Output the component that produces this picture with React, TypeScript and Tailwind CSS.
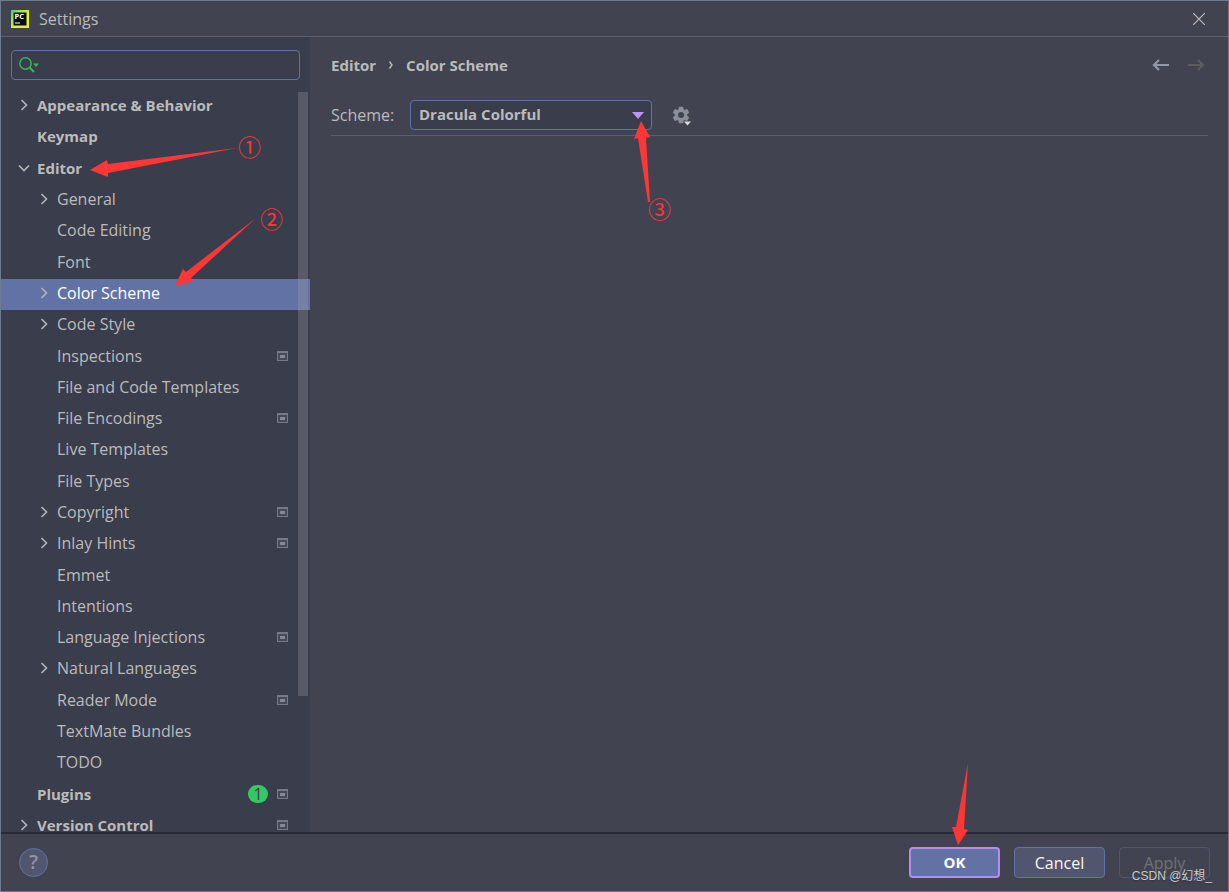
import type { ReactNode } from 'react'

interface TreeItem {
  label: string;
  level: 0 | 1;
  chevron?: 'right' | 'down';
  project?: boolean;
  updates?: number;
  selected?: boolean;
}

const items: TreeItem[] = [
  { label: 'Appearance & Behavior', level: 0, chevron: 'right' },
  { label: 'Keymap', level: 0 },
  { label: 'Editor', level: 0, chevron: 'down' },
  { label: 'General', level: 1, chevron: 'right' },
  { label: 'Code Editing', level: 1 },
  { label: 'Font', level: 1 },
  { label: 'Color Scheme', level: 1, chevron: 'right', selected: true },
  { label: 'Code Style', level: 1, chevron: 'right' },
  { label: 'Inspections', level: 1, project: true },
  { label: 'File and Code Templates', level: 1 },
  { label: 'File Encodings', level: 1, project: true },
  { label: 'Live Templates', level: 1 },
  { label: 'File Types', level: 1 },
  { label: 'Copyright', level: 1, chevron: 'right', project: true },
  { label: 'Inlay Hints', level: 1, chevron: 'right', project: true },
  { label: 'Emmet', level: 1 },
  { label: 'Intentions', level: 1 },
  { label: 'Language Injections', level: 1, project: true },
  { label: 'Natural Languages', level: 1, chevron: 'right' },
  { label: 'Reader Mode', level: 1, project: true },
  { label: 'TextMate Bundles', level: 1 },
  { label: 'TODO', level: 1 },
  { label: 'Plugins', level: 0, project: true, updates: 1 },
  { label: 'Version Control', level: 0, chevron: 'right', project: true },
];

function Logo() {
  return (
    <svg width="18" height="18" viewBox="0 0 18 18" aria-hidden="true">
      <defs>
        <linearGradient id="logo" x1="0" y1="0" x2="1" y2="1">
          <stop offset="0" stopColor="#21d789" />
          <stop offset="0.3" stopColor="#a8e63c" />
          <stop offset="0.6" stopColor="#e6f02c" />
          <stop offset="1" stopColor="#e8ee30" />
        </linearGradient>
      </defs>
      <rect width="18" height="18" fill="url(#logo)" />
      <rect x="2.500" y="2.500" width="13" height="13" fill="#04100a" />
      <text x="3.500" y="9.300" fontSize="7.500" fontWeight="700" fill="#fff">PC</text>
      <rect x="4" y="12.500" width="5" height="1" fill="#fff" />
    </svg>
  );
}

function Chevron({ dir }: { dir?: 'right' | 'down' }) {
  return (
    <svg width="12" height="12" viewBox="0 0 12 12" fill="none" stroke="#b4b6bb" strokeWidth="1.6" aria-hidden="true">
      {dir === 'right' && <path d="M3.5 1 L8.5 6 L3.5 11" />}
      {dir === 'down' && <path d="M1 3.5 L6 8.5 L11 3.5" />}
    </svg>
  );
}

function ProjectIcon() {
  return (
    <svg width="11" height="10" viewBox="0 0 11 10" aria-hidden="true">
      <rect width="11" height="10" fill="#767a87" />
      <rect x="1" y="2" width="9" height="7" fill="#474a59" />
      <rect x="3" y="4" width="5" height="3" fill="#858995" />
    </svg>
  );
}

function TreeRow({ item }: { item: TreeItem }) {
  return (
    <li className={`flex flex-1 ${item.selected ? 'bg-[#6272a4] text-white' : ''}`}>
      <button
        type="button"
        className={`flex w-full items-center gap-[7px] pr-[22px] pb-[3px] text-left ${item.level === 0 ? 'pl-[17px] text-[15px] font-bold' : 'pl-[37px]'}`}
      >
        <Chevron dir={item.chevron} />
        <span className="flex-1 leading-5 whitespace-nowrap">{item.label}</span>
        {item.updates && (
          <span className="mr-[2px] flex h-[18px] w-5 items-center justify-center rounded-full bg-[#33c864] text-base font-normal text-[#3a3d4c]">
            {item.updates}
          </span>
        )}
        {item.project && <ProjectIcon />}
      </button>
    </li>
  );
}

function Sidebar() {
  return (
    <aside className="flex w-[309px] shrink-0 flex-col overflow-hidden bg-[#3a3d4c]">
      <label className="mx-[10px] mt-[13px] flex h-[30px] shrink-0 items-center rounded border border-[#6272a4] pl-[7px]">
        <svg width="21" height="16" viewBox="0 0 21 16" fill="none" stroke="#33b85f" strokeWidth="1.5" aria-hidden="true">
          <circle cx="6.5" cy="6.5" r="5.7" />
          <path d="M10.5 10.5 L15 15" strokeWidth="2" />
          <path d="M14 6.5h6l-3 3.5z" fill="#33b85f" stroke="none" />
        </svg>
        <input type="text" aria-label="Search settings" className="min-w-0 flex-1 bg-transparent px-1 outline-none" />
      </label>
      <nav className="relative mt-[11px] min-h-0 flex-1 overflow-hidden" aria-label="Settings">
        <ul className="flex h-[calc(100%+10px)] flex-col">
          {items.map((item) => (
            <TreeRow key={item.label} item={item} />
          ))}
        </ul>
        {/* scrollbar thumb */}
        <div className="absolute top-px right-[2px] h-[604px] w-[10px] bg-[#a0a1a5]/30" />
      </nav>
    </aside>
  );
}

function Content() {
  return (
    <main className="flex-1 pr-5 pl-[21px]">
      <div className="flex h-[56px] items-center justify-between pr-[3px]">
        <div className="flex items-center gap-3 text-[15px] font-bold">
          <span>Editor</span>
          <svg width="6" height="10" viewBox="0 0 6 10" fill="none" stroke="#bbbbbb" strokeWidth="1.4" aria-hidden="true">
            <path d="M1.5 1.5 L4 5 L1.5 8.5" />
          </svg>
          <span>Color Scheme</span>
        </div>
        <div className="flex gap-[17px]">
          <button type="button" aria-label="Back" className="text-[#9297a6]"><Arrow d="M17 6H2 M7 1L2 6l5 5" /></button>
          <button type="button" aria-label="Forward" disabled className="text-[#5c5d5f]"><Arrow d="M1 6h15 M11 1l5 5-5 5" /></button>
        </div>
      </div>
      <div className="flex h-[43px] items-start border-b border-[#5b5e6b] pt-[7px]">
        <label htmlFor="scheme" className="w-[79px] leading-[30px]">Scheme:</label>
        <div className="relative">
          <select
            id="scheme"
            className="h-[30px] w-[242px] appearance-none rounded border border-[#6272a4] bg-[#3a3d4c] px-2 pb-px text-[15px] font-bold outline-none"
          >
            <option>Dracula Colorful</option>
          </select>
          <svg className="pointer-events-none absolute top-3 right-2" width="12" height="7" viewBox="0 0 12 7" aria-hidden="true">
            <path d="M0 0h12L6 7z" fill="#bd93f9" />
          </svg>
        </div>
        <button type="button" aria-label="Scheme actions" className="mt-[6px] ml-5">
          <svg width="20" height="20" viewBox="0 0 20 20" aria-hidden="true">
            <g fill="#8a8e9b" transform="translate(9 9)">
              <path fillRule="evenodd" d="M0-6A6 6 0 1 1 0 6 6 6 0 1 1 0-6z M0-3A3 3 0 1 0 0 3 3 3 0 1 0 0-3z" />
              {[0, 60, 120, 180, 240, 300].map((a) => (
                <path key={a} transform={`rotate(${a})`} d="M-2.8-5l.8-3.300h4l.8 3.300z" />
              ))}
            </g>
            <path d="M12 15.500h7l-3.500 4z" fill="#d8d9dc" />
          </svg>
        </button>
      </div>
    </main>
  );
}

function Arrow({ d }: { d: string }) {
  return (
    <svg width="18" height="12" viewBox="0 0 18 12" fill="none" stroke="currentColor" strokeWidth="2.2" aria-hidden="true">
      <path d={d} />
    </svg>
  );
}

function Mark({ className, children }: { className: string; children: ReactNode }) {
  return (
    <span className={`absolute font-['Noto_Sans_CJK_SC',sans-serif] text-[23px] leading-6 ${className}`}>
      {children}
    </span>
  );
}

function Annotations() {
  return (
    <div className="pointer-events-none absolute top-0 left-0 text-[#ff3636]">
      <svg width="700" height="300" viewBox="0 0 700 300" fill="currentColor" aria-hidden="true">
        <path d="M89 169l17-10 1 4 129-16-129 25v4z" />
        <path d="M174 285l8-17 3 3 70-54-65 60 2 3z" />
        <path d="M640 120l9 16-4 1 4 64-2 0-10-64-4 1z" />
      </svg>
      <Mark className="top-[133px] left-[237px]">①</Mark>
      <Mark className="top-[205px] left-[259px]">②</Mark>
      <Mark className="top-[195px] left-[647px]">③</Mark>
    </div>
  );
}

export default function App() {
  return (
    <div className="relative flex h-screen flex-col overflow-hidden border border-[#6b7a8c] bg-[#414450] font-['Open_Sans','Noto_Sans_CJK_SC',sans-serif] text-base text-[#bbbbbb]">
      <header className="flex h-9 shrink-0 items-center gap-[10px] border-b border-[#5b5e6b] pr-[23px] pl-[10px]">
        <Logo />
        <h1 className="flex-1">Settings</h1>
        <button type="button" aria-label="Close">
          <svg width="12" height="12" viewBox="0 0 12 12" stroke="#bbbbbb" strokeWidth="1.2" aria-hidden="true">
            <path d="M0 0l12 12M12 0L0 12" />
          </svg>
        </button>
      </header>
      <div className="flex min-h-0 flex-1">
        <Sidebar />
        <Content />
      </div>
      <footer className="flex h-[59px] shrink-0 items-center border-t-2 border-[#282a36] pr-[18px] pb-px pl-[18px]">
        <button type="button" aria-label="Help" className="h-[29px] w-[29px] rounded-full border border-[#6272a4] bg-[#51556e] text-xl leading-6 font-semibold text-[#9093a0]">
          ?
        </button>
        <div className="ml-auto flex gap-[14px]">
          <button type="button" className="relative h-[31px] w-[91px] rounded border-2 border-[#b48cec] bg-[#6272a4] pt-px text-[15px] font-bold text-white">
            OK
            <svg className="pointer-events-none absolute right-[28px] bottom-[31px]" width="18" height="82" viewBox="0 0 18 82" fill="#ff3636" aria-hidden="true">
              <path d="M16 0l-4 66 4 1-10 15-6-18h4z" />
            </svg>
          </button>
          <button type="button" className="h-[31px] w-[91px] rounded border border-[#6272a4] bg-[#51556e] pt-px text-[#f8f8f2]">
            Cancel
          </button>
          <button type="button" disabled className="h-[31px] w-[91px] rounded border border-[#51556e] pt-px text-[#6f7177]">
            Apply
          </button>
        </div>
      </footer>
      <Annotations />
      <span className="pointer-events-none absolute right-4 bottom-[7px] font-['Liberation_Sans','Noto_Sans_CJK_SC',sans-serif] text-xs text-[#c9cacd] text-shadow-sm">
        CSDN @幻想_
      </span>
    </div>
  );
}
